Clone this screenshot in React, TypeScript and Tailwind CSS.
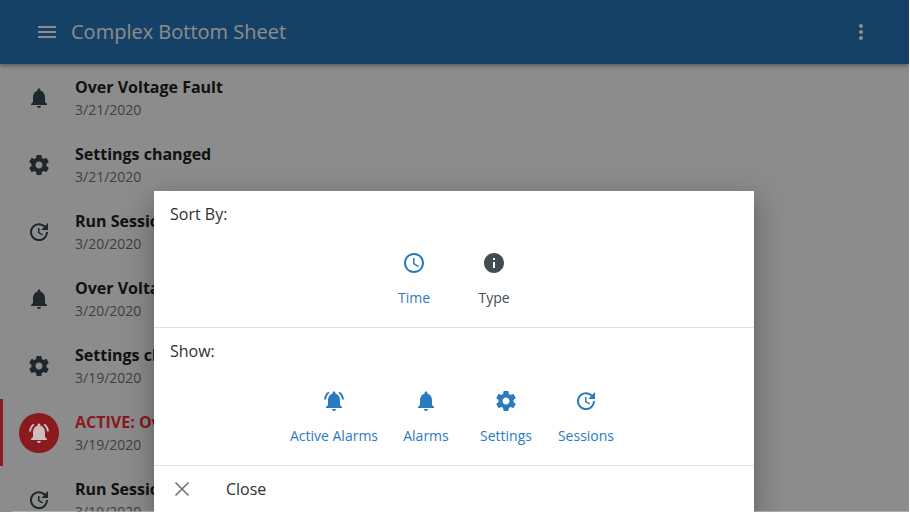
import React from 'react';

const icons = {
  bell: 'M12 22c1.1 0 2-.9 2-2h-4c0 1.1.89 2 2 2zm6-6v-5c0-3.07-1.64-5.64-4.5-6.32V4c0-.83-.67-1.5-1.5-1.5s-1.5.67-1.5 1.5v.68C7.63 5.36 6 7.92 6 11v5l-2 2v1h16v-1l-2-2z',
  active: 'M7.58 4.08L6.15 2.65C3.75 4.48 2.17 7.3 2.03 10.5h2c.15-2.65 1.51-4.97 3.55-6.42zm12.39 6.42h2c-.15-3.2-1.73-6.02-4.12-7.85l-1.42 1.43c2.02 1.45 3.39 3.77 3.54 6.42zM18 11c0-3.07-1.64-5.64-4.5-6.32V4c0-.83-.67-1.5-1.5-1.5s-1.5.67-1.5 1.5v.68C7.63 5.36 6 7.92 6 11v5l-2 2v1h16v-1l-2-2v-5zm-6 11c.14 0 .27-.01.4-.04.65-.14 1.18-.58 1.44-1.18.1-.24.15-.5.15-.78h-4c.01 1.1.9 2 2.01 2z',
  settings: 'M19.43 12.98c.04-.32.07-.64.07-.98s-.03-.66-.07-.98l2.11-1.65c.19-.15.24-.42.12-.64l-2-3.46c-.12-.22-.39-.3-.61-.22l-2.49 1c-.52-.4-1.08-.73-1.69-.98l-.38-2.65C14.46 2.18 14.25 2 14 2h-4c-.25 0-.46.18-.49.42l-.38 2.65c-.61.25-1.17.59-1.69.98l-2.49-1c-.23-.09-.49 0-.61.22l-2 3.46c-.13.22-.07.49.12.64l2.11 1.65c-.04.32-.07.65-.07.98s.03.66.07.98l-2.11 1.65c-.19.15-.24.42-.12.64l2 3.46c.12.22.39.3.61.22l2.49-1c.52.4 1.08.73 1.69.98l.38 2.65c.03.24.24.42.49.42h4c.25 0 .46-.18.49-.42l.38-2.65c.61-.25 1.17-.59 1.69-.98l2.49 1c.23.09.49 0 .61-.22l2-3.46c.12-.22.07-.49-.12-.64l-2.11-1.65zM12 15.5c-1.93 0-3.5-1.57-3.5-3.5s1.57-3.5 3.5-3.5 3.5 1.57 3.5 3.5-1.57 3.5-3.5 3.5z',
  update: 'M21 10.12h-6.78l2.74-2.82c-2.73-2.7-7.15-2.8-9.88-.1-2.73 2.71-2.73 7.08 0 9.79s7.15 2.71 9.88 0C18.32 15.65 19 14.08 19 12.1h2c0 1.98-.88 4.55-2.64 6.29-3.51 3.48-9.21 3.48-12.72 0-3.5-3.47-3.53-9.11-.02-12.58s9.14-3.47 12.65 0L21 3v7.12zM12.5 8v4.25l3.5 2.08-.72 1.21L11 13V8h1.5z',
  time: 'M11.99 2C6.47 2 2 6.48 2 12s4.47 10 9.99 10C17.52 22 22 17.52 22 12S17.52 2 11.99 2zM12 20c-4.42 0-8-3.58-8-8s3.58-8 8-8 8 3.58 8 8-3.58 8-8 8zm.5-13H11v6l5.25 3.15.75-1.23-4.5-2.67z',
  info: 'M12 2C6.48 2 2 6.48 2 12s4.48 10 10 10 10-4.48 10-10S17.52 2 12 2zm1 15h-2v-6h2v6zm0-8h-2V7h2v2z',
  menu: 'M3 18h18v-2H3v2zm0-5h18v-2H3v2zm0-7v2h18V6H3z',
  more: 'M12 8c1.1 0 2-.9 2-2s-.9-2-2-2-2 .9-2 2 .9 2 2 2zm0 2c-1.1 0-2 .9-2 2s.9 2 2 2 2-.9 2-2-.9-2-2-2zm0 6c-1.1 0-2 .9-2 2s.9 2 2 2 2-.9 2-2-.9-2-2-2z',
};

type IconName = keyof typeof icons;

const Icon = ({ name, className }: { name: IconName; className?: string }) => (
  <svg viewBox="0 0 24 24" fill="currentColor" className={className}>
    <path d={icons[name]} />
  </svg>
);

const rows: { icon: IconName; title: string; date: string; active?: boolean }[] = [
  { icon: 'bell', title: 'Over Voltage Fault', date: '3/21/2020' },
  { icon: 'settings', title: 'Settings changed', date: '3/21/2020' },
  { icon: 'update', title: 'Run Session', date: '3/20/2020' },
  { icon: 'bell', title: 'Over Voltage Fault', date: '3/20/2020' },
  { icon: 'settings', title: 'Settings changed', date: '3/19/2020' },
  { icon: 'active', title: 'ACTIVE: Over Voltage Fault', date: '3/19/2020', active: true },
  { icon: 'update', title: 'Run Session', date: '3/19/2020' },
];

const SheetOption = ({ icon, label, on = true, w = 'w-20' }: { icon: IconName; label: string; on?: boolean; w?: string }) => (
  <div className={`flex flex-col items-center ${w} ${on ? 'text-[#2a7abf]' : 'text-[#424d53]'}`}>
    <Icon name={icon} className="w-6 h-6" />
    <span className="mt-[13px] text-[14px] leading-[20px] whitespace-nowrap">{label}</span>
  </div>
);

export default function App() {
  return (
    <div className="relative w-[909px] h-[512px] overflow-hidden bg-white font-['Open_Sans',sans-serif]">
      <header className="relative z-10 h-16 bg-[#2877ba] text-white flex items-center pl-[35px] pr-[36px] shadow-[0_2px_4px_rgba(0,0,0,0.35)]">
        <Icon name="menu" className="w-6 h-6" />
        <h1 className="ml-3 text-[20px] leading-7">Complex Bottom Sheet</h1>
        <Icon name="more" className="w-6 h-6 ml-auto" />
      </header>

      <ul>
        {rows.map((row, i) => (
          <li
            key={i}
            className={`h-[67px] flex items-center ${row.active ? 'border-l-[3px] border-[#fa3036] pl-[16px]' : 'pl-[27px]'}`}
          >
            {row.active ? (
              <div className="w-10 h-10 rounded-full bg-[#fa3036] flex items-center justify-center">
                {/* sits above the dim layer, the bell stays light in the reference */}
                <Icon name={row.icon} className="relative z-30 w-6 h-6 text-[#cdbdbd]" />
              </div>
            ) : (
              <Icon name={row.icon} className="w-6 h-6 text-[#37474f]" />
            )}
            <div className={`pt-[2px] ${row.active ? 'ml-4' : 'ml-6'}`}>
              <div className={`text-[16px] leading-[22px] font-bold ${row.active ? 'text-[#fa3036]' : 'text-[#212121]'}`}>
                {row.title}
              </div>
              <div className="text-[14px] leading-[22px] mt-px text-[#757575]">{row.date}</div>
            </div>
          </li>
        ))}
      </ul>

      {/* dim layer + sheet */}
      <div className="absolute inset-0 z-20 bg-black/45" />
      <div className="absolute z-30 top-[191px] left-[154px] w-[600px] bg-white text-[#303030] shadow-[0_8px_10px_-5px_rgba(0,0,0,0.2),0_16px_24px_2px_rgba(0,0,0,0.14),0_6px_30px_5px_rgba(0,0,0,0.12)]">
        <section className="h-[137px] border-b border-[#e0e0e0] px-4 pt-3">
          <div className="text-[16px] leading-[22px]">Sort By:</div>
          <div className="flex justify-center mt-[26px]">
            <SheetOption icon="time" label="Time" />
            <SheetOption icon="info" label="Type" on={false} />
          </div>
        </section>
        <section className="h-[138px] border-b border-[#e0e0e0] px-4 pt-3">
          <div className="text-[16px] leading-[22px]">Show:</div>
          <div className="flex justify-center mt-[27px]">
            <SheetOption icon="active" label="Active Alarms" w="w-[104px]" />
            <SheetOption icon="bell" label="Alarms" w="w-[80px]" />
            <SheetOption icon="settings" label="Settings" />
            <SheetOption icon="update" label="Sessions" />
          </div>
        </section>
        <div className="h-[46px] flex items-center pl-4">
          <svg viewBox="0 0 24 24" fill="none" stroke="currentColor" strokeWidth="1.75" className="w-6 h-6 text-[#777777]">
            <path d="M5.5 5.5l13 13M18.5 5.5l-13 13" />
          </svg>
          <span className="ml-8 text-[16px]">Close</span>
        </div>
      </div>

      {/* light hairline along the bottom edge */}
      <div className="absolute z-40 bottom-0 left-3 right-0 h-px bg-white/30" />
    </div>
  );
}
